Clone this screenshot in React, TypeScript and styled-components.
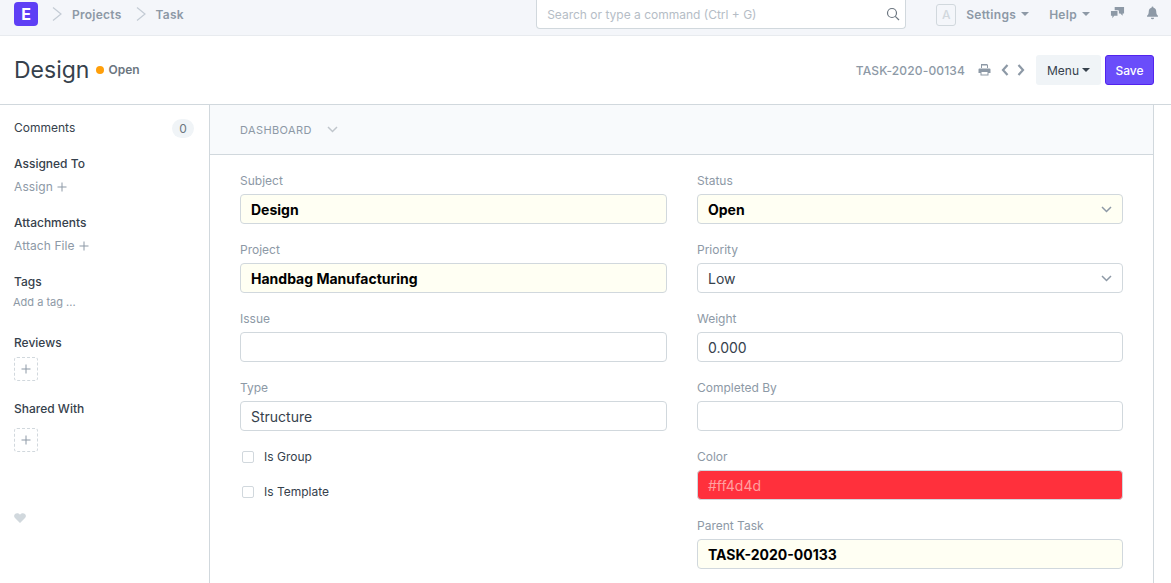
import React from 'react';
import styled, { createGlobalStyle } from 'styled-components';

const GlobalStyle = createGlobalStyle`
  html, body {
    margin: 0;
    padding: 0;
    height: 100%;
    overflow: hidden;
    background: #fff;
    font-family: Inter, "Liberation Sans", sans-serif;
  }
`;

const Page = styled.div`
  width: 1171px;
  height: 583px;
  overflow: hidden;
  display: flex;
  flex-direction: column;
`;

/* top navbar */
const Navbar = styled.header`
  height: 36px;
  box-sizing: border-box;
  background: #f4f6fa;
  border-bottom: 1px solid #e8ebef;
  display: flex;
  align-items: center;
  padding: 0 11px 0 14px;
  flex-shrink: 0;
`;

const Logo = styled.div`
  width: 24px;
  height: 24px;
  margin-top: -8px;
  border-radius: 4px;
  background: #5e3ff5;
  color: #fff;
  font-size: 16px;
  font-weight: 700;
  display: flex;
  align-items: center;
  justify-content: center;
`;

const Crumb = styled.span`
  font-size: 12px;
  font-weight: 600;
  letter-spacing: 0.25px;
  color: #8d99a6;
  margin-left: 10px;
  margin-top: -6px;
`;

const CrumbArrow = styled.svg`
  width: 10px;
  height: 16px;
  margin-left: 14px;
  margin-top: -7px;
  fill: none;
  stroke: #c3cbd4;
  stroke-width: 1.2;
`;

const SearchBox = styled.div`
  width: 370px;
  height: 29px;
  box-sizing: border-box;
  margin-left: auto;
  margin-top: -7px;
  background: #fff;
  border: 1px solid #d1d8dd;
  border-top: none;
  border-radius: 0 0 4px 4px;
  display: flex;
  align-items: center;
  justify-content: space-between;
  padding: 1px 4px 0 10px;
  font-size: 12px;
  color: #b5bdc6;
`;

const Avatar = styled.div`
  width: 18px;
  height: 20px;
  margin-left: 30px;
  margin-top: -6px;
  border: 1px solid #d1d8dd;
  border-radius: 3px;
  color: #d1d8dd;
  font-size: 12px;
  font-weight: 500;
  display: flex;
  align-items: center;
  justify-content: center;
`;

const NavMenu = styled.span<{ $gap: number }>`
  margin-left: ${p => p.$gap}px;
  margin-top: -7px;
  font-size: 12px;
  font-weight: 600;
  letter-spacing: 0.3px;
  color: #8d99a6;
  display: flex;
  align-items: center;
  gap: 5px;
`;

const Caret = styled.span<{ $color?: string }>`
  width: 0;
  height: 0;
  border-left: 4px solid transparent;
  border-right: 4px solid transparent;
  border-top: 4px solid ${p => p.$color || '#8d99a6'};
`;

const NavIcon = styled.svg<{ $gap: number }>`
  width: 15px;
  height: 15px;
  margin-left: ${p => p.$gap}px;
  margin-top: -10px;
  fill: #8d99a6;
`;

/* page head */
const PageHead = styled.div`
  height: 69px;
  box-sizing: border-box;
  border-bottom: 1px solid #d1d8dd;
  display: flex;
  align-items: center;
  padding: 0 17px 0 14px;
  flex-shrink: 0;
`;

const Title = styled.h1`
  margin: 0;
  font-size: 23px;
  font-weight: 400;
  color: #36414c;
  line-height: 28px;
`;

const Indicator = styled.span`
  display: flex;
  align-items: center;
  gap: 4px;
  margin: -1px 0 0 7px;
  font-size: 12px;
  font-weight: 600;
  color: #6c7680;
`;

const Dot = styled.span`
  width: 8px;
  height: 8px;
  border-radius: 50%;
  background: #ff9f0a;
`;

const DocName = styled.span`
  margin-left: auto;
  font-size: 12px;
  font-weight: 500;
  letter-spacing: 0.15px;
  color: #8d99a6;
`;

const HeadIcon = styled.svg<{ $gap: number; $w: number }>`
  width: ${p => p.$w}px;
  height: 14px;
  margin-left: ${p => p.$gap}px;
  color: #8d99a6;
`;

const MenuButton = styled.div`
  width: 65px;
  height: 30px;
  margin-left: 11px;
  border-radius: 3px;
  background: #f0f4f7;
  color: #36414c;
  font-size: 12px;
  display: flex;
  align-items: center;
  justify-content: center;
  gap: 3px;
`;

const SaveButton = styled.div`
  width: 49px;
  height: 30px;
  box-sizing: border-box;
  margin-left: 4px;
  border-radius: 3px;
  background: #6a4dfa;
  border: 1px solid #5223ee;
  color: #fff;
  font-size: 12px;
  font-weight: 500;
  display: flex;
  align-items: center;
  justify-content: center;
`;

/* body */
const Body = styled.div`
  flex: 1;
  display: flex;
  min-height: 0;
`;

const Sidebar = styled.aside`
  width: 210px;
  box-sizing: border-box;
  border-right: 1px solid #d1d8dd;
  padding: 14px 15px 0 14px;
  flex-shrink: 0;
`;

const SideRow = styled.div`
  height: 16px;
  display: flex;
  align-items: center;
  justify-content: space-between;
  font-size: 12px;
  color: #36414c;
`;

const Badge = styled.span`
  width: 22px;
  height: 19px;
  margin-top: 2px;
  border-radius: 10px;
  background: #f0f4f7;
  color: #6c7680;
  font-size: 12px;
  display: flex;
  align-items: center;
  justify-content: center;
`;

const SideHeading = styled.div<{ $top: number }>`
  margin-top: ${p => p.$top}px;
  font-size: 12px;
  line-height: 16px;
  font-weight: 500;
  color: #36414c;
`;

const SideAction = styled.div`
  margin-top: 7px;
  font-size: 12px;
  line-height: 16px;
  letter-spacing: 0.1px;
  color: #8d99a6;
  display: flex;
  align-items: center;
  gap: 4px;
`;

const TagHint = styled.div`
  margin: 4px 0 0 -1px;
  font-size: 11px;
  line-height: 16px;
  color: #8d99a6;
`;

const AddBox = styled.div<{ $top: number }>`
  width: 24px;
  height: 24px;
  box-sizing: border-box;
  margin-top: ${p => p.$top}px;
  border: 1px dashed #d1d8dd;
  border-radius: 3px;
  color: #8d99a6;
  display: flex;
  align-items: center;
  justify-content: center;
`;

const LikeIcon = styled.svg`
  display: block;
  width: 12px;
  height: 12px;
  margin-top: 60px;
  fill: #d1d8dd;
`;

const Main = styled.main`
  width: 944px;
  box-sizing: border-box;
  border-right: 1px solid #d1d8dd;
  flex-shrink: 0;
`;

const DashboardBand = styled.div`
  height: 50px;
  box-sizing: border-box;
  background: #f8fafc;
  border-bottom: 1px solid #d1d8dd;
  padding-left: 30px;
  display: flex;
  align-items: center;
  gap: 15px;
  font-size: 11px;
  letter-spacing: 0.4px;
  color: #8d99a6;
`;

const FormGrid = styled.div`
  display: grid;
  grid-template-columns: 427px 426px;
  column-gap: 30px;
  padding: 18px 0 0 30px;
  align-items: start;
`;

const Column = styled.div`
  display: flex;
  flex-direction: column;
`;

const Field = styled.div`
  height: 69px;
`;

const Label = styled.div`
  font-size: 12px;
  line-height: 16px;
  color: #8d99a6;
  margin-bottom: 5px;
`;

const Control = styled.div<{ $mandatory?: boolean; $color?: string }>`
  height: 30px;
  box-sizing: border-box;
  border: 1px solid #d1d8dd;
  border-radius: 4px;
  padding: 0 10px;
  background: ${p => p.$color || (p.$mandatory ? '#fffff3' : '#fff')};
  color: ${p => (p.$color ? '#ffa0a0' : p.$mandatory ? '#000' : '#36414c')};
  font-size: 14px;
  font-weight: ${p => (p.$mandatory ? 700 : 400)};
  display: flex;
  align-items: center;
  justify-content: space-between;
`;

const CheckBoxes = styled.div`
  margin-top: -10px;
`;

const CheckRow = styled.label`
  height: 35px;
  display: flex;
  align-items: center;
  gap: 10px;
  padding-left: 2px;
  font-size: 12px;
  color: #36414c;
`;

const CheckMark = styled.span`
  width: 10px;
  height: 10px;
  border: 1px solid #d1d8dd;
  border-radius: 2px;
`;

const Plus = ({ size, color }: { size: number; color: string }) => (
  <svg width={size} height={size} viewBox="0 0 10 10" stroke={color} strokeWidth="1" fill="none">
    <path d="M5 0.5v9M0.5 5h9" />
  </svg>
);

const Chevron = ({ color }: { color: string }) => (
  <svg width="11" height="7" viewBox="0 0 11 7" fill="none" stroke={color} strokeWidth="1.5">
    <path d="M1 1l4.500 4.500L10 1" />
  </svg>
);

interface FieldDef {
  label: string;
  value?: string;
  mandatory?: boolean;
  select?: boolean;
  color?: string;
}

const leftFields: FieldDef[] = [
  { label: 'Subject', value: 'Design', mandatory: true },
  { label: 'Project', value: 'Handbag Manufacturing', mandatory: true },
  { label: 'Issue' },
  { label: 'Type', value: 'Structure' },
];

const rightFields: FieldDef[] = [
  { label: 'Status', value: 'Open', mandatory: true, select: true },
  { label: 'Priority', value: 'Low', select: true },
  { label: 'Weight', value: '0.000' },
  { label: 'Completed By' },
  { label: 'Color', value: '#ff4d4d', color: '#ff303c' },
  { label: 'Parent Task', value: 'TASK-2020-00133', mandatory: true },
];

const renderField = (field: FieldDef) => (
  <Field key={field.label}>
    <Label>{field.label}</Label>
    <Control $mandatory={field.mandatory} $color={field.color}>
      <span>{field.value}</span>
      {field.select && <Chevron color="#8d99a6" />}
    </Control>
  </Field>
);

const App: React.FC = () => {
  return (
    <Page>
      <GlobalStyle />
      <Navbar>
        <Logo>E</Logo>
        <CrumbArrow viewBox="0 0 10 16"><path d="M1 1.500l8 6.500-8 6.500" /></CrumbArrow>
        <Crumb>Projects</Crumb>
        <CrumbArrow viewBox="0 0 10 16"><path d="M1 1.500l8 6.500-8 6.500" /></CrumbArrow>
        <Crumb>Task</Crumb>
        <SearchBox>
          <span>Search or type a command (Ctrl + G)</span>
          <svg width="16" height="16" viewBox="0 0 16 16" fill="none" stroke="#6c7680" strokeWidth="1.2">
            <circle cx="7" cy="7" r="4.500" />
            <path d="M10.300 10.300L14 14" />
          </svg>
        </SearchBox>
        <Avatar>A</Avatar>
        <NavMenu $gap={10}>Settings <Caret /></NavMenu>
        <NavMenu $gap={20}>Help <Caret /></NavMenu>
        <NavIcon $gap={20} viewBox="0 0 16 16">
          <path d="M5 2h10v7h-1.500v2.500L11 9H9.500V6.500a1 1 0 0 0-1-1H5z" />
          <path d="M1 6.500h7v5H4.500L2.500 14v-2.500H1z" />
        </NavIcon>
        <NavIcon $gap={20} viewBox="0 0 16 16">
          <path d="M8 1.500a1 1 0 0 1 1 1v.4c2 .5 3 2 3 4.100 0 2.500.7 3.500 1.800 4.500v1H2.200v-1C3.300 10.500 4 9.500 4 7c0-2.100 1-3.600 3-4.100v-.4a1 1 0 0 1 1-1zM6.300 13.500h3.400a1.700 1.700 0 0 1-3.400 0z" />
        </NavIcon>
      </Navbar>

      <PageHead>
        <Title>Design</Title>
        <Indicator><Dot />Open</Indicator>
        <DocName>TASK-2020-00134</DocName>
        <HeadIcon $gap={13} $w={13} viewBox="0 0 13 14" fill="currentColor">
          <path d="M3 1h6l1 1v3H9V2.500H4V5H3zM1.500 5.500h10a1 1 0 0 1 1 1V10h-2v2.500h-8V10H.5V6.500a1 1 0 0 1 1-1zM3.500 9v2.500h6V9z" />
        </HeadIcon>
        <HeadIcon $gap={10} $w={8} viewBox="0 0 8 14" fill="none" stroke="currentColor" strokeWidth="2.200">
          <path d="M6.500 2L2 7l4.500 5" />
        </HeadIcon>
        <HeadIcon $gap={8} $w={8} viewBox="0 0 8 14" fill="none" stroke="currentColor" strokeWidth="2.200">
          <path d="M1.500 2L6 7l-4.500 5" />
        </HeadIcon>
        <MenuButton>Menu <Caret $color="#36414c" /></MenuButton>
        <SaveButton>Save</SaveButton>
      </PageHead>

      <Body>
        <Sidebar>
          <SideRow>Comments <Badge>0</Badge></SideRow>
          <SideHeading $top={21}>Assigned To</SideHeading>
          <SideAction>Assign <Plus size={10} color="#8d99a6" /></SideAction>
          <SideHeading $top={20}>Attachments</SideHeading>
          <SideAction>Attach File <Plus size={10} color="#8d99a6" /></SideAction>
          <SideHeading $top={20}>Tags</SideHeading>
          <TagHint>Add a tag ...</TagHint>
          <SideHeading $top={25}>Reviews</SideHeading>
          <AddBox $top={6}><Plus size={10} color="#8d99a6" /></AddBox>
          <SideHeading $top={20}>Shared With</SideHeading>
          <AddBox $top={11}><Plus size={10} color="#8d99a6" /></AddBox>
          <LikeIcon viewBox="0 0 12 12">
            <path d="M6 11L1 6a3 3 0 0 1 0-4C2.300.8 4.500.8 6 2.700 7.500.8 9.700.8 11 2a3 3 0 0 1 0 4z" />
          </LikeIcon>
        </Sidebar>

        <Main>
          <DashboardBand>
            DASHBOARD
            <Chevron color="#c0c6cc" />
          </DashboardBand>
          <FormGrid>
            <Column>
              {leftFields.map(renderField)}
              <CheckBoxes>
                <CheckRow><CheckMark />Is Group</CheckRow>
                <CheckRow><CheckMark />Is Template</CheckRow>
              </CheckBoxes>
            </Column>
            <Column>{rightFields.map(renderField)}</Column>
          </FormGrid>
        </Main>
      </Body>
    </Page>
  );
};

export default App;
